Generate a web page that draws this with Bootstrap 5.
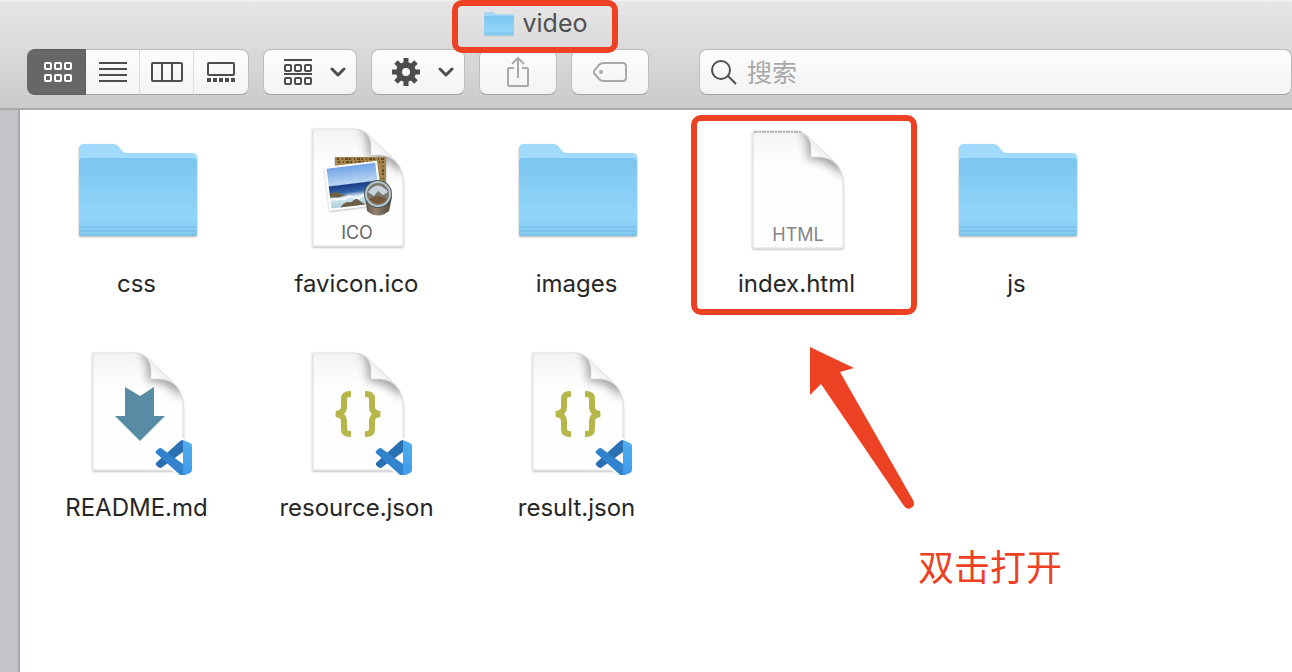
<!DOCTYPE html>
<html lang="zh-CN">
<head>
<meta charset="utf-8">
<meta name="viewport" content="width=device-width, initial-scale=1">
<title>video</title>
<link href="https://cdn.jsdelivr.net/npm/bootstrap@5.3.0/dist/css/bootstrap.min.css" rel="stylesheet">
<style>
:root { --marker: #ed4124; --ink: #4d4d4d; }
body { font-family: Inter, "Noto Sans CJK SC", sans-serif; color: #262626; background: #fff; overflow-x: hidden; }
svg { display: block; flex: none; }
.win-head { background: linear-gradient(#f6f6f6 0, #e6e6e6 2px, #cbcbcb 100%); border-bottom: 2px solid #a9a9a9; }
.win-title { position: relative; z-index: 2; width: 166px; height: 49px; margin-left: 452px; padding-bottom: 4px; font-size: 25px; line-height: 30px; font-weight: 400; color: #505050; }
.win-title::after, .marked::after { content: ""; position: absolute; border: 6px solid var(--marker); border-radius: 10px; pointer-events: none; }
.win-title::after { inset: 0 0 -4px 0; }
.marked::after { inset: 5px -9px 19px 3px; }
.tools { padding: 0 0 13px 27px; gap: 14px; }
.tool, .search-box { height: 46px; border: 1px solid #bdbdbd; border-bottom-color: #a0a0a0; border-radius: 8px; background: linear-gradient(#fdfdfd, #f3f3f3); color: var(--ink); }
.tool { padding: 0; display: flex; align-items: center; justify-content: center; }
.views .tool { width: 54px; border-left-width: 0; border-right-color: #dcdcdc; border-radius: 0; }
.views .tool:first-child { width: 59px; padding-left: 4px; background: #676767; border-color: #5e5e5e; color: #fff; border-radius: 8px 0 0 8px; }
.views .tool:last-child { width: 55px; border-right-color: #bdbdbd; border-radius: 0 8px 8px 0; }
.tool-menu { width: 94px; gap: 17px; padding-left: 9px; }
.tool-one { width: 78px; color: #a9a9a9; }
.search-box { margin-left: 36px; padding-left: 11px; gap: 10px; }
.search-box input { border: 0; outline: 0; background: none; min-width: 0; padding: 2px 0 0; font-size: 25px; line-height: 36px; }
.search-box input::placeholder { color: #a8a8a8; opacity: 1; }
.side { width: 20px; background: #c3c4c7; border-right: 2px solid #a8aaae; }
.files { padding-left: 8px; }
.file { position: relative; width: 220px; height: 224px; padding-top: 13px; color: inherit; text-decoration: none; }
.file-name { margin-top: 17px; padding-right: 3px; font-size: 24px; line-height: 32px; }
.kind { font-size: 18px; text-anchor: middle; fill: #858585; }
.kind-dark { fill: #666; }
.pointer { position: absolute; left: 790px; top: 237px; }
.hint { position: absolute; left: 898px; top: 429px; font-size: 36px; line-height: 52px; color: var(--marker); font-family: "Noto Sans CJK SC", sans-serif; }
</style>
</head>
<body class="d-flex flex-column min-vh-100">
<svg width="0" height="0" class="position-absolute" aria-hidden="true">
  <defs>
    <linearGradient id="front" x2="0" y2="1"><stop stop-color="#7cc5f0"/><stop offset=".75" stop-color="#91d5f9"/><stop offset="1" stop-color="#83c9f0"/></linearGradient>
    <linearGradient id="fold" x1="0" y1="1" x2=".7" y2=".3"><stop stop-color="#fff"/><stop offset=".5" stop-color="#fbfbfb"/><stop offset="1" stop-color="#e2e2e2"/></linearGradient>
    <linearGradient id="paper" x2="0" y2="1"><stop stop-color="#f4f4f4"/><stop offset=".3" stop-color="#fefefe"/></linearGradient>
    <linearGradient id="sea" x2="0" y2="1"><stop stop-color="#72a4e6"/><stop offset=".43" stop-color="#b9d5f2"/><stop offset=".46" stop-color="#1c3c86"/><stop offset=".64" stop-color="#3265a9"/><stop offset=".76" stop-color="#d7ebf2"/><stop offset="1" stop-color="#a9ccd8"/></linearGradient>
    <linearGradient id="barrel"><stop stop-color="#5b564f"/><stop offset=".4" stop-color="#96836a"/><stop offset="1" stop-color="#4a443e"/></linearGradient>
    <linearGradient id="codeR" x2="0" y2="1"><stop stop-color="#4fb0ef"/><stop offset="1" stop-color="#419aea"/></linearGradient>
    <filter id="drop" x="-10%" y="-10%" width="120%" height="125%"><feDropShadow dx="0" dy="1" stdDeviation="1" flood-opacity=".3"/></filter>
    <filter id="soft" x="-50%" y="-50%" width="200%" height="200%"><feGaussianBlur stdDeviation="5"/></filter>
    <clipPath id="sheet"><path d="M19 6H60C66 6 70 8 74 12L98 35C106 42 109 50 109 62V123H19Z"/></clipPath>
    <symbol id="folder" viewBox="0 0 128 128">
      <g filter="url(#drop)">
        <path d="M5 26Q5 21 10 21H39Q42 21 44 23L48 28Q50 30 53 30H118Q123 30 123 35V110Q123 113 120 113H8Q5 113 5 110Z" fill="#a1dafa"/>
        <path d="M5 39Q5 35 9 35H119Q123 35 123 39V110Q123 113 120 113H8Q5 113 5 110Z" fill="url(#front)"/>
        <path d="M5 104H123M5 108H123M5 112H123" stroke="#72b9e3" stroke-width="1"/>
      </g>
    </symbol>
    <symbol id="page" viewBox="0 0 128 128">
      <path d="M19 6H60C66 6 70 8 74 12L98 35C106 42 109 50 109 62V123H19Z" fill="url(#paper)" stroke="#dedede" filter="url(#drop)"/>
      <g clip-path="url(#sheet)"><path d="M66 2Q75 14 74 34Q94 34 108 52L114 0Z" fill="#808080" filter="url(#soft)" opacity=".75"/></g>
      <path d="M68 8C75 11 77 17 77 24V32H84C91 32 97 34 103 40L74 11Z" fill="url(#fold)" stroke="#dadada" stroke-width=".5"/>
    </symbol>
    <symbol id="code" viewBox="-2 -2 40 40">
      <path d="M26 0L34 3Q36 4 36 6V30Q36 32 34 33L26 36L14 26L5 28L0 24L6 18L0 12L4 8L13 14Z" fill="#fff" stroke="#fff" stroke-width="4" stroke-linejoin="round"/>
      <path d="M27 0V12L5 28Q3 28 2 27L0 25Q-1 23 1 22L23 2Q25 0 27 0Z" fill="#2a6fb2"/>
      <path d="M27 24L5 8Q3 8 2 9L0 11Q-1 13 1 14L23 34Q25 36 27 36Z" fill="#3183ce"/>
      <path d="M27 0L34 3Q36 4 36 6V30Q36 32 34 33L27 36Z" fill="url(#codeR)"/>
    </symbol>
    <symbol id="caret" viewBox="0 0 16 10"><path d="M2 2L8 8L14 2" fill="none" stroke="currentColor" stroke-width="3" stroke-linecap="round" stroke-linejoin="round"/></symbol>
  </defs>
</svg>

<header class="win-head">
  <h1 class="win-title d-flex align-items-center justify-content-center gap-2 mb-0">
    <svg width="32" height="32"><use href="#folder"/></svg><span>video</span>
  </h1>
  <div class="tools d-flex">
    <div class="views d-flex" role="group" aria-label="显示">
      <button type="button" class="tool" aria-label="图标"><svg width="30" height="22" fill="none" stroke="currentColor" stroke-width="2"><rect x="2" y="2" width="6" height="6" rx="1"/><rect x="12" y="2" width="6" height="6" rx="1"/><rect x="22" y="2" width="6" height="6" rx="1"/><rect x="2" y="14" width="6" height="6" rx="1"/><rect x="12" y="14" width="6" height="6" rx="1"/><rect x="22" y="14" width="6" height="6" rx="1"/></svg></button>
      <button type="button" class="tool" aria-label="列表"><svg width="28" height="20" stroke="currentColor" stroke-width="2"><path d="M0 1H28M0 7H28M0 13H28M0 19H28"/></svg></button>
      <button type="button" class="tool" aria-label="分栏"><svg width="32" height="20" fill="none" stroke="currentColor" stroke-width="2"><rect x="1" y="1" width="30" height="18" rx="1"/><path d="M11 1V19M21 1V19"/></svg></button>
      <button type="button" class="tool" aria-label="画廊"><svg width="28" height="20" fill="none" stroke="currentColor" stroke-width="2"><rect x="1" y="1" width="26" height="12" rx="1"/><path d="M0 18H28" stroke-width="4" stroke-dasharray="4 2"/></svg></button>
    </div>
    <button type="button" class="tool tool-menu" aria-label="分组"><svg width="30" height="28" fill="none" stroke="currentColor" stroke-width="2"><path d="M1 2H29M1 16H29"/><rect x="2" y="7" width="6" height="6" rx="1"/><rect x="12" y="7" width="6" height="6" rx="1"/><rect x="22" y="7" width="6" height="6" rx="1"/><rect x="2" y="20" width="6" height="6" rx="1"/><rect x="12" y="20" width="6" height="6" rx="1"/><rect x="22" y="20" width="6" height="6" rx="1"/></svg><svg width="16" height="10"><use href="#caret"/></svg></button>
    <button type="button" class="tool tool-menu" aria-label="操作"><svg width="30" height="30" viewBox="-15 -15 30 30" stroke="currentColor" fill="none"><circle r="7" stroke-width="6"/><path stroke-width="5" d="M0-9V-14M0 9V14M-9 0H-14M9 0H14M6-6L10-10M-6 6L-10 10M-6-6L-10-10M6 6L10 10"/></svg><svg width="16" height="10"><use href="#caret"/></svg></button>
    <button type="button" class="tool tool-one" aria-label="共享"><svg width="24" height="32" fill="none" stroke="currentColor" stroke-width="2"><path d="M8 12H3Q2 12 2 13V29Q2 30 3 30H21Q22 30 22 29V13Q22 12 21 12H16M12 22V2M6 8L12 2L18 8"/></svg></button>
    <button type="button" class="tool tool-one" aria-label="标签"><svg width="34" height="20" fill="none" stroke="currentColor" stroke-width="2"><path d="M10 1H30Q33 1 33 4V16Q33 19 30 19H10Q8 19 6 17L1 11Q0 10 1 9L6 3Q8 1 10 1Z"/><circle cx="8" cy="10" r="2" fill="currentColor" stroke="none"/></svg></button>
    <label class="search-box d-flex align-items-center flex-grow-1">
      <svg width="26" height="26" fill="none" stroke="#505050" stroke-width="2"><circle cx="10" cy="11" r="9"/><path d="M17 17L25 25"/></svg>
      <input type="search" class="flex-grow-1" placeholder="搜索" aria-label="搜索">
    </label>
  </div>
</header>

<main class="d-flex flex-grow-1 position-relative">
  <div class="side flex-shrink-0"></div>
  <div class="position-relative flex-grow-1">
    <div class="files d-flex flex-wrap align-content-start">
      <a href="#" class="file d-flex flex-column align-items-center"><svg width="128" height="128"><use href="#folder"/></svg><span class="file-name">css</span></a>
      <a href="#" class="file d-flex flex-column align-items-center"><svg width="128" height="128"><use href="#page"/>
        <g filter="url(#drop)"><path d="M41 34H92V78H41Z" fill="#a5854f"/><path d="M43 36H90M44 39H90M89 38V60" stroke="#65491f" stroke-width="2" stroke-dasharray="2 3 1 2 3 1"/>
        <g transform="rotate(-7 57 64)"><path d="M33 41H86V85H33Z" fill="#fff"/><path d="M35 43H84V83H35Z" fill="url(#sea)"/><path d="M35 68L42 67L47 70L52 71L44 73L35 72ZM44 83Q49 77 55 79L61 76L69 83Z" fill="#6d6048"/><path d="M35 74L49 75L54 73L63 76L72 72" fill="none" stroke="#f6fafa" stroke-width="2"/></g></g>
        <path d="M71 74L73 88Q84 97 95 88L98 74Z" fill="url(#barrel)"/><circle cx="84" cy="71" r="14" fill="#4b565c"/><circle cx="84" cy="71" r="12" fill="#7c796c" stroke="#b6c5c9" stroke-width="2"/><path d="M74 69Q84 56 94 69L89 72L84 68L80 73Z" fill="#c8d4de"/><path d="M75 76Q84 70 93 76Q84 85 75 76Z" fill="#75583b"/>
        <text x="63" y="116" class="kind kind-dark">ICO</text></svg><span class="file-name">favicon.ico</span></a>
      <a href="#" class="file d-flex flex-column align-items-center"><svg width="128" height="128"><use href="#folder"/></svg><span class="file-name">images</span></a>
      <a href="#" class="file marked d-flex flex-column align-items-center"><svg width="128" height="128"><use href="#page" y="2"/><path d="M20 9H68" stroke="#888" stroke-dasharray="4 1 2 1"/><text x="64" y="118" class="kind">HTML</text></svg><span class="file-name">index.html</span></a>
      <a href="#" class="file d-flex flex-column align-items-center"><svg width="128" height="128"><use href="#folder"/></svg><span class="file-name">js</span></a>
      <a href="#" class="file d-flex flex-column align-items-center"><svg width="128" height="128"><use href="#page"/><path d="M51 40L66 49L80 40V69H91L66 94L41 69H51Z" fill="#588ba4"/><use href="#code" x="80" y="91" width="40" height="40"/></svg><span class="file-name">README.md</span></a>
      <a href="#" class="file d-flex flex-column align-items-center"><svg width="128" height="128"><use href="#page"/><g fill="none" stroke="#b7b64b" stroke-width="6"><path id="braces" d="M57 47H56Q50 47 50 52V60Q50 66 42 67Q50 68 50 74V82Q50 87 56 87H57M71 47H72Q78 47 78 52V60Q78 66 86 67Q78 68 78 74V82Q78 87 72 87H71"/></g><use href="#code" x="80" y="91" width="40" height="40"/></svg><span class="file-name">resource.json</span></a>
      <a href="#" class="file d-flex flex-column align-items-center"><svg width="128" height="128"><use href="#page"/><g fill="none" stroke="#b7b64b" stroke-width="6"><use href="#braces"/></g><use href="#code" x="80" y="91" width="40" height="40"/></svg><span class="file-name">result.json</span></a>
    </div>
    <svg class="pointer" width="106" height="164" aria-hidden="true"><path d="M0 0L44 21L30 25L103 153Q106 158 101 161Q97 163 94 159L11 37L0 48Z" fill="#ed4124"/></svg>
    <div class="hint">双击打开</div>
  </div>
</main>
<script src="https://cdn.jsdelivr.net/npm/bootstrap@5.3.0/dist/js/bootstrap.bundle.min.js"></script>
</body>
</html>
